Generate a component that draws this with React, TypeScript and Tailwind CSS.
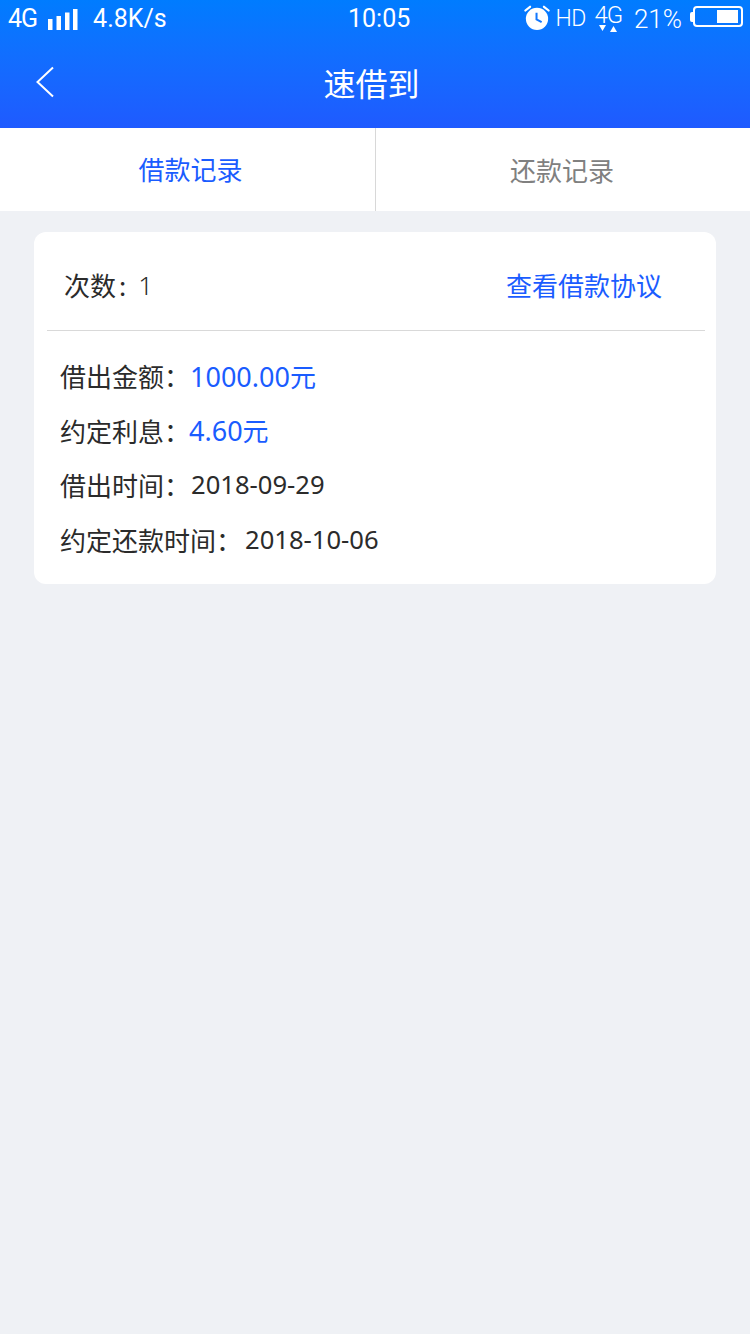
const FONT = "font-['Noto_Sans_CJK_SC','Noto_Sans',sans-serif]";

function SignalBars() {
  return (
    <svg width="30" height="22" viewBox="0 0 30 22" className="ml-[11px] shrink-0" fill="#fff">
      <rect x="0" y="11" width="4.500" height="11" />
      <rect x="8.500" y="8" width="4.500" height="14" />
      <rect x="17" y="4.500" width="4.500" height="17.500" />
      <rect x="25" y="1" width="4.500" height="21" />
    </svg>
  );
}

function AlarmIcon() {
  return (
    <svg width="26" height="26" viewBox="0 0 28 28" className="mt-[-3px] shrink-0">
      <circle cx="14" cy="16" r="12" fill="#fff" />
      <path d="M1.500 7 L6.500 3 M26.500 7 L21.500 3" stroke="#fff" strokeWidth="2.400" strokeLinecap="round" />
      <path d="M13.500 9.500 V16.500 L19 19.500" stroke="#1378ff" strokeWidth="2.200" fill="none" />
    </svg>
  );
}

function Battery() {
  return (
    <div className="mt-[-4px] ml-[8px] flex items-center">
      <div className="h-[10px] w-[3px] rounded-l-[2px] bg-white" />
      <div className="flex h-[21px] w-[50px] justify-end rounded-[4px] border-2 border-white p-[2px] pr-[3px]">
        <div className="h-full w-[21px] bg-white" />
      </div>
    </div>
  );
}

function StatusBar() {
  return (
    <div className="relative flex h-[37px] items-center justify-between pl-[8px] pr-[7px] text-white">
      <div className="flex items-center">
        <span className="font-['Roboto'] text-[25px] leading-none tracking-[-1px]">4G</span>
        <SignalBars />
        <span className="ml-[15px] font-['Roboto'] text-[25px] leading-none">4.8K/s</span>
      </div>
      <span className="absolute left-[348px] top-[5px] font-['Roboto'] text-[25px] leading-[28px]">10:05</span>
      <div className="flex items-center">
        <AlarmIcon />
        <span className="ml-[6px] font-['Roboto'] text-[23px] leading-none font-light tracking-[-0.500px]">HD</span>
        <div className="ml-[8px] flex w-[29px] flex-col items-center">
          <span className="font-['Roboto'] text-[24px] leading-[20px] font-light tracking-[-1px]">4G</span>
          <svg width="20" height="7" viewBox="0 0 20 7" fill="#fff">
            <path d="M1 0 H8 L4.500 6 Z" />
            <path d="M12 7 H19 L15.500 1 Z" />
          </svg>
        </div>
        <span className="ml-[11px] font-['Roboto'] text-[26px] leading-none font-light">21%</span>
        <Battery />
      </div>
    </div>
  );
}

function Row({ label, value, unit, blue, gap }: { label: string; value: string; unit?: string; blue?: boolean; gap: string }) {
  return (
    <div className="flex h-[54.500px] items-center">
      <span className="text-[26px] leading-none text-[#2b2b2b]">{label}</span>
      <span className={`${gap} ${blue ? "text-[27px] text-[#1a5cff]" : "text-[25.600px] text-[#2b2b2b]"} font-['Noto_Sans'] leading-none`}>
        {value}
        {unit && <span className="font-['Noto_Sans_CJK_SC'] text-[26px]">{unit}</span>}
      </span>
    </div>
  );
}

export default function App() {
  return (
    <div className={`${FONT} flex min-h-[1334px] flex-col bg-[#eff1f5]`}>
      <header className="h-[128px] bg-gradient-to-b from-[#007cff] to-[#1f5aff]">
        <StatusBar />
        <div className="relative flex h-[91px] items-center justify-center">
          <svg width="20" height="32" viewBox="0 0 20 32" className="absolute left-[35px] top-[29px]" fill="none" stroke="#fff" strokeWidth="2">
            <path d="M18 1.500 L2.500 16 L18 30.500" />
          </svg>
          <h1 className="pr-[7px] pb-[2px] text-[32px] leading-none font-normal text-white">速借到</h1>
        </div>
      </header>

      <div className="flex h-[83px] bg-white">
        <div className="flex w-[376px] items-center justify-center border-r border-[#d8d8d8] pl-[6px] pb-[2px] text-[26px] leading-none text-[#1a5cff]">
          借款记录
        </div>
        <div className="flex flex-1 items-center justify-center pr-[2px] text-[26px] leading-none text-[#808080]">
          还款记录
        </div>
      </div>

      <section className="mx-[34px] mt-[21px] h-[352px] rounded-[12px] bg-white">
        <div className="mr-[11px] ml-[13px] flex h-[99px] items-center justify-between border-b border-[#d9d9d9] pr-[43px] pl-[17px]">
          <span className="flex items-center pt-[8px] text-[26px] leading-none text-[#2b2b2b]">
            <span>次数</span>
            <span className="ml-[3px]">:</span>
            <span className="ml-[12px] font-['Noto_Sans'] font-light">1</span>
          </span>
          <span className="pt-[8px] text-[26px] leading-none text-[#1a5cff]">查看借款协议</span>
        </div>
        <div className="pt-[18px] pl-[26px]">
          <Row label="借出金额：" value="1000.00" unit="元" blue gap="ml-0" />
          <Row label="约定利息：" value="4.60" unit="元" blue gap="ml-[-1px]" />
          <Row label="借出时间：" value="2018-09-29" gap="ml-[1px]" />
          <Row label="约定还款时间：" value="2018-10-06" gap="ml-[3px]" />
        </div>
      </section>
    </div>
  );
}
